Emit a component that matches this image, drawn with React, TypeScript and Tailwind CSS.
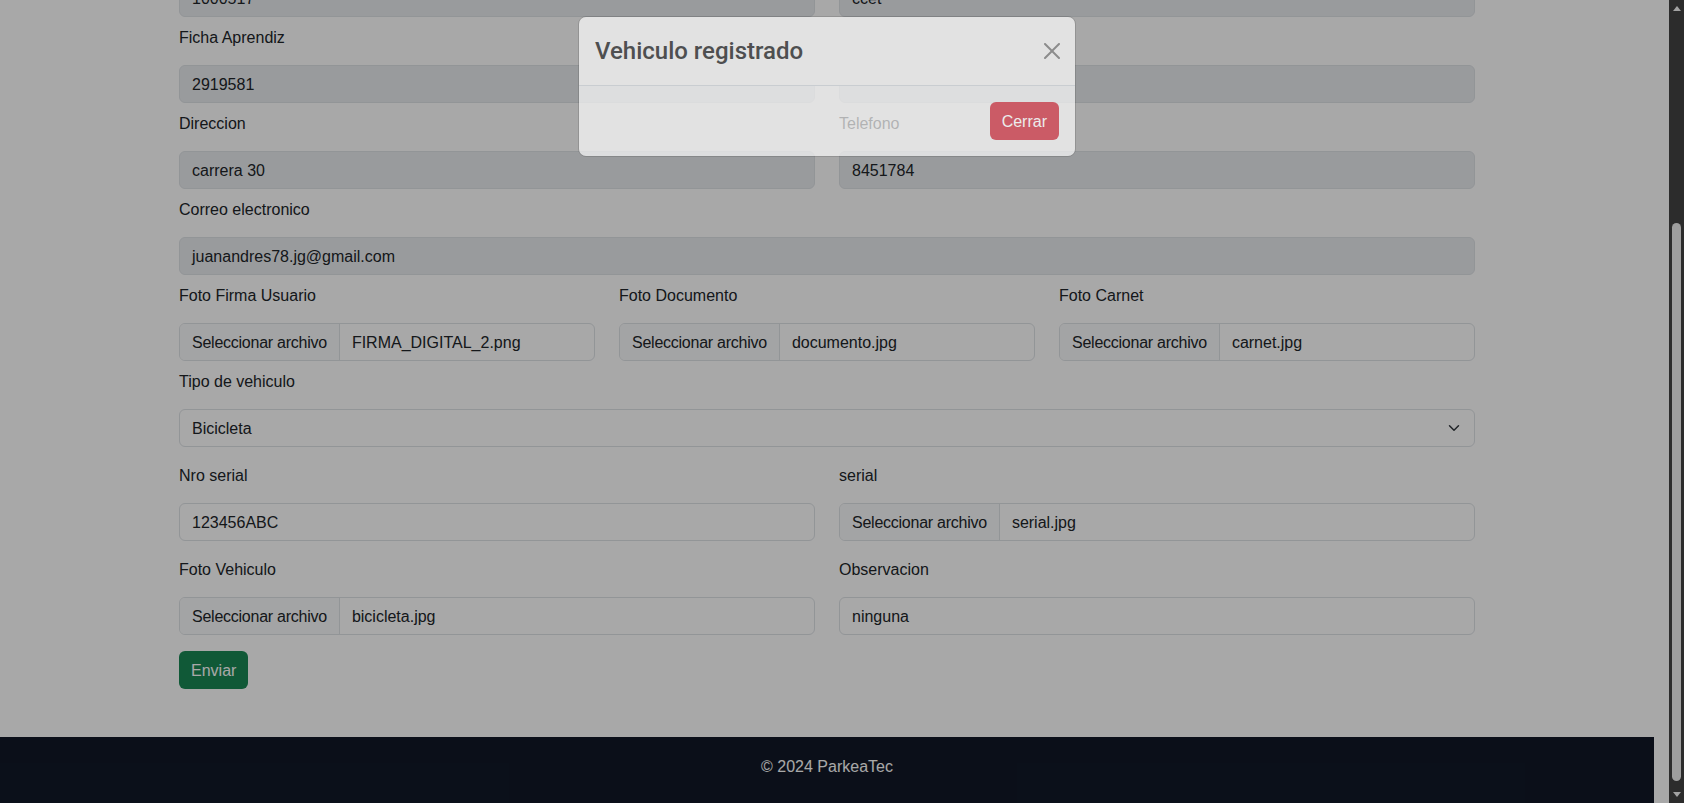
import React from 'react';

const inputBase =
  'h-[38px] rounded-[6px] border border-[#dee2e6] flex items-center text-[#212529] overflow-hidden';

function TextBox({ value, readOnly }: { value: string; readOnly?: boolean }) {
  return (
    <div className={`${inputBase} px-3 ${readOnly ? 'bg-[#e9ecef]' : 'bg-white'}`}>
      <span className="whitespace-nowrap pt-[2px]">{value}</span>
    </div>
  );
}

function FileBox({ file }: { file: string }) {
  return (
    <div className={`${inputBase} bg-white`}>
      <span className="h-full px-3 pt-[2px] flex items-center bg-[#f8f9fa] border-r border-[#dee2e6] whitespace-nowrap tracking-[-0.25px]">
        Seleccionar archivo
      </span>
      <span className="ml-3 pt-[2px] whitespace-nowrap">{file}</span>
    </div>
  );
}

function Label({ children }: { children?: React.ReactNode }) {
  return <div className="h-6 leading-[26px] mb-4 text-[#212529] whitespace-nowrap">{children}</div>;
}

function Field({
  label,
  children,
}: {
  label?: string;
  children: React.ReactNode;
}) {
  return (
    <div>
      <Label>{label}</Label>
      {children}
    </div>
  );
}

export default function App() {
  return (
    <div className="relative flex h-[803px] w-[1684px] overflow-hidden font-['Liberation_Sans',Arial,sans-serif] text-[16px] leading-6">
      <div className="relative h-full w-[1669px] bg-white overflow-hidden">
        <div className="flex h-full w-[1654px] flex-col">
          {/* Registration form (scrolled to the bottom) */}
          <main className="flex-1">
            <div className="mx-auto w-[1320px] px-3">
              <div className="-mt-[21px] mb-2 grid grid-cols-2 gap-x-6">
                <TextBox value="1000517" readOnly />
                <TextBox value="ccet" readOnly />
              </div>

              <div className="mb-2 grid grid-cols-2 gap-x-6">
                <Field label="Ficha Aprendiz">
                  <TextBox value="2919581" readOnly />
                </Field>
                <Field>
                  <TextBox value="" readOnly />
                </Field>
              </div>

              <div className="mb-2 grid grid-cols-2 gap-x-6">
                <Field label="Direccion">
                  <TextBox value="carrera 30" readOnly />
                </Field>
                <Field label="Telefono">
                  <TextBox value="8451784" readOnly />
                </Field>
              </div>

              <div className="mb-2">
                <Field label="Correo electronico">
                  <TextBox value="juanandres78.jg@gmail.com" readOnly />
                </Field>
              </div>

              <div className="mb-2 grid grid-cols-3 gap-x-6">
                <Field label="Foto Firma Usuario">
                  <FileBox file="FIRMA_DIGITAL_2.png" />
                </Field>
                <Field label="Foto Documento">
                  <FileBox file="documento.jpg" />
                </Field>
                <Field label="Foto Carnet">
                  <FileBox file="carnet.jpg" />
                </Field>
              </div>

              <div className="mb-4">
                <Field label="Tipo de vehiculo">
                  <div className={`${inputBase} bg-white justify-between pl-3 pr-[14px]`}>
                    <span className="pt-[2px]">Bicicleta</span>
                    <svg width="12" height="12" viewBox="0 0 16 16" fill="none">
                      <path
                        d="m2 5 6 6 6-6"
                        stroke="#343a40"
                        strokeWidth="2"
                        strokeLinecap="round"
                        strokeLinejoin="round"
                      />
                    </svg>
                  </div>
                </Field>
              </div>

              <div className="mb-4 grid grid-cols-2 gap-x-6">
                <Field label="Nro serial">
                  <TextBox value="123456ABC" />
                </Field>
                <Field label="serial">
                  <FileBox file="serial.jpg" />
                </Field>
              </div>

              <div className="mb-4 grid grid-cols-2 gap-x-6">
                <Field label="Foto Vehiculo">
                  <FileBox file="bicicleta.jpg" />
                </Field>
                <Field label="Observacion">
                  <TextBox value="ninguna" />
                </Field>
              </div>

              <button className="h-[38px] rounded-[6px] bg-[#198754] px-3 pt-[2px] text-white">Enviar</button>
            </div>
          </main>

          <footer className="h-[66px] bg-[#111827] pt-[18px] text-center text-white">
            © 2024 ParkeaTec
          </footer>
        </div>

        {/* Modal backdrop, mid fade */}
        <div className="absolute inset-0 bg-black/[0.34]" />

        {/* Modal, mid fade: header reads solid, footer lets the form show through */}
        <div className="absolute left-[578px] top-[16px] w-[498px] overflow-hidden rounded-[8px] border border-black/[0.12]">
          <div className="flex items-center justify-between border-b border-[#c9cdd1] bg-[#e2e2e2] p-4">
            <h1 className="font-['Roboto',sans-serif] text-[24px] font-medium leading-[36px] text-[#4e4f50]">
              Vehiculo registrado
            </h1>
            <svg width="16" height="16" viewBox="0 0 16 16" className="mr-[-1px]">
              <path
                d="M.293.293a1 1 0 0 1 1.414 0L8 6.586 14.293.293a1 1 0 1 1 1.414 1.414L9.414 8l6.293 6.293a1 1 0 0 1-1.414 1.414L8 9.414l-6.293 6.293a1 1 0 0 1-1.414-1.414L6.586 8 .293 1.707a1 1 0 0 1 0-1.414z"
                fill="#8c8c8c"
              />
            </svg>
          </div>
          <div className="flex justify-end bg-white/[0.67] p-3">
            <button className="m-1 h-[38px] rounded-[6px] bg-[#cb5b66] px-3 pt-[2px] text-[#ececec]">
              Cerrar
            </button>
          </div>
        </div>
      </div>

      {/* Scrollbar */}
      <div className="relative h-full w-[15px] bg-[#2c2c2c]">
        <div className="absolute left-[3.5px] top-[6px] h-0 w-0 border-x-[4px] border-b-[5px] border-x-transparent border-b-[#a3a3a3]" />
        <div className="absolute left-[3px] top-[223px] h-[558px] w-[9px] rounded-full bg-[#9e9e9e]" />
        <div className="absolute bottom-[6px] left-[3.5px] h-0 w-0 border-x-[4px] border-t-[5px] border-x-transparent border-t-[#a3a3a3]" />
      </div>
    </div>
  );
}
